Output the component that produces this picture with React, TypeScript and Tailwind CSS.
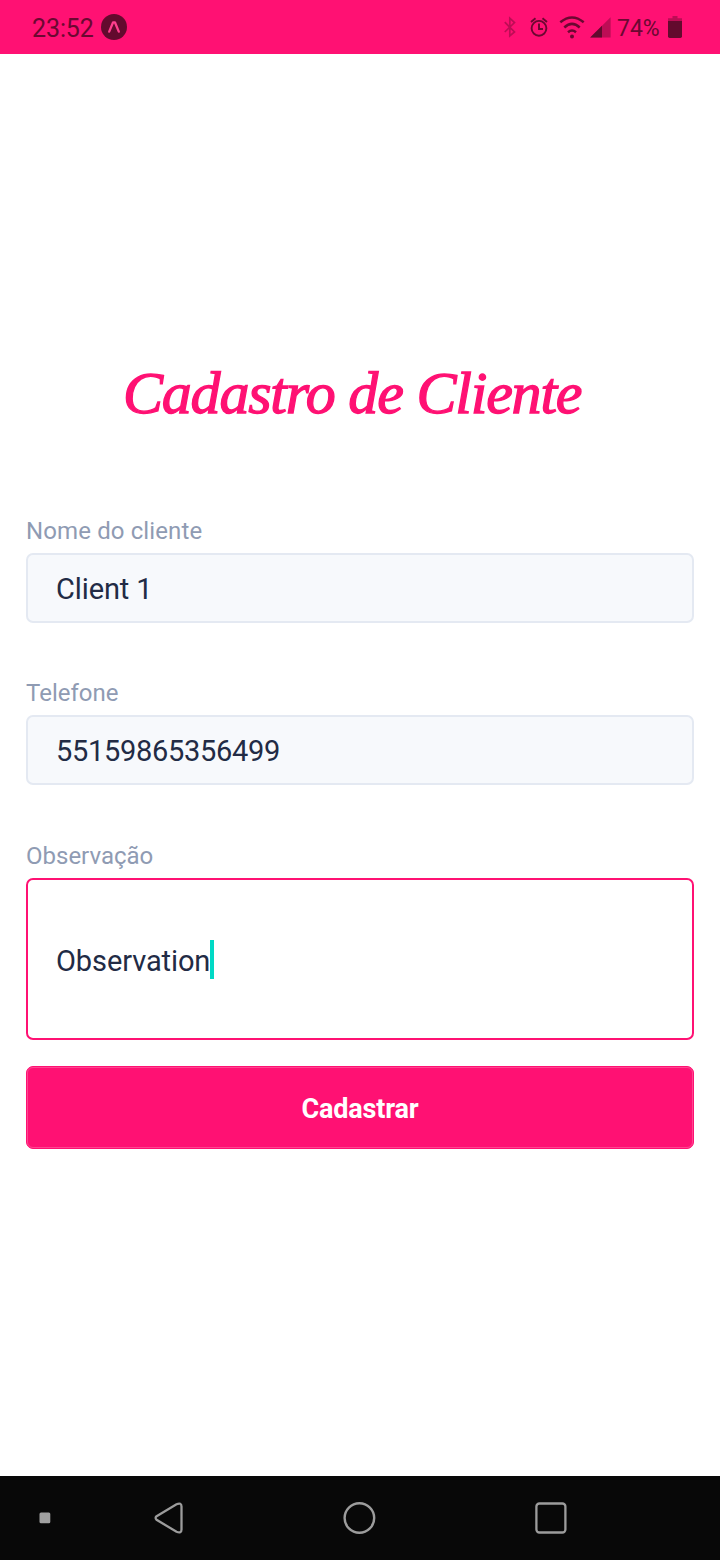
import type { ReactNode } from "react";

function StatusBar() {
  return (
    <header className="flex h-[54px] shrink-0 items-center bg-[#ff1173] pl-8 text-[#6b0831]">
      <span className="w-[69px] pt-[3px] text-[25px] leading-[51px] tracking-[-0.1px]">23:52</span>
      <svg width="26" height="26" viewBox="0 0 26 26">
        <circle cx="13" cy="13" r="13" fill="#630a2e" />
        <path d="M8.2 17.6 12.1 8.3h1.8l3.9 9.3" fill="none" stroke="#ff3f8e" strokeWidth="2.3" strokeLinecap="round" strokeLinejoin="round" />
      </svg>
      <svg className="ml-[373px]" width="118" height="30" viewBox="500 12 118 30">
        <path d="M504.8 22.2 514.5 32 509.8 36V18.2L514.5 22.5 504.8 32" fill="none" stroke="#bd0d55" strokeWidth="1.7" />
        <g fill="none" stroke="#6b0831" strokeWidth="1.9">
          <circle cx="539" cy="28.3" r="7.4" />
          <path d="M539 23.5V29h4M531 22l4.5-3.7M547 22l-4.5-3.7" />
        </g>
        <g fill="none" stroke="#6b0831" strokeWidth="2.5">
          <path d="M560.3 22.3Q572 12.7 583.7 22.3" />
          <path d="M564.3 27.5Q572 20.3 579.7 27.5" />
          <path d="M568 32.2Q572 28.7 576 32.2" />
        </g>
        <circle cx="572" cy="36.5" r="2" fill="#6b0831" />
        <path d="M590.2 37.6 610.6 17.3V37.6Z" fill="#bd0d55" />
        <path d="M590.2 37.6 602 25.8V37.6Z" fill="#630a2e" />
      </svg>
      <span className="-ml-[1px] w-[50px] pt-[3px] text-[23px] leading-[51px]">74%</span>
      <svg width="16" height="24" viewBox="0 0 16 24">
        <path d="M5.5 1h5v2.2H15V6H1V3.2h4.5Z" fill="#bd0d55" />
        <path d="M1 6h14v15.3q0 1.7-1.7 1.7H2.700Q1 23 1 21.300Z" fill="#630a2e" />
      </svg>
    </header>
  );
}

function Field({ label, children }: { label: string; children: ReactNode }) {
  return (
    <label className="flex flex-col">
      <span className="h-[38px] text-[24px] leading-[32px] text-[#8f9bb3]">{label}</span>
      {children}
    </label>
  );
}

function NavBar() {
  return (
    <nav className="flex h-[84px] shrink-0 items-center bg-[#080808]">
      <svg className="ml-[39px]" width="12" height="12" viewBox="0 0 12 12">
        <rect x="0.500" y="0.500" width="10.800" height="10.800" rx="1.500" fill="#a0a0a0" />
      </svg>
      <svg className="ml-[102px]" width="32" height="34" viewBox="0 0 32 34" fill="none" stroke="#9c9c9c" strokeWidth="2.3">
        <path d="M3.600 15.200 23.500 3.200Q28.500 1.200 28.500 5.500V28.500Q28.500 32.800 23.500 30.800L3.600 18.800Q1.600 17 3.600 15.200Z" />
      </svg>
      <svg className="ml-[157px]" width="34" height="34" viewBox="0 0 34 34" fill="none" stroke="#9c9c9c" strokeWidth="2.4">
        <circle cx="17.400" cy="17" r="14.800" />
      </svg>
      <svg className="ml-[158px]" width="34" height="34" viewBox="0 0 34 34" fill="none" stroke="#9c9c9c" strokeWidth="2.300">
        <rect x="2.400" y="2.500" width="29" height="29" rx="3" />
      </svg>
    </nav>
  );
}

export default function App() {
  return (
    <div className="flex h-[1560px] w-[720px] flex-col bg-white font-['Roboto',sans-serif]">
      <StatusBar />
      <main className="flex flex-1 flex-col px-[26px]">
        <h1 className="mt-[294px] h-[96px] pl-[97px] text-[60px] leading-[90px] tracking-[-1.2px] whitespace-nowrap text-[#ff1173] italic [-webkit-text-stroke:1.3px_#ff1173] font-['Satisfy','Liberation_Serif',cursive]">
          Cadastro de Cliente
        </h1>
        <form className="mt-[71px] flex flex-col">
          <div className="tracking-[0.12px]">
            <Field label="Nome do cliente">
              <div className="flex h-[70px] items-center rounded-[7px] border-2 border-[#e4e9f2] bg-[#f7f9fc] pt-[3px] pl-7 text-[29px] tracking-[-0.1px] text-[#222b45]">Client 1</div>
            </Field>
          </div>
          <div className="mt-[54px]">
            <Field label="Telefone">
              <div className="flex h-[70px] items-center rounded-[7px] border-2 border-[#e4e9f2] bg-[#f7f9fc] pt-[3px] pl-7 text-[29px] tracking-[-0.3px] text-[#222b45]">55159865356499</div>
            </Field>
          </div>
          <div className="mt-[55px]">
            <Field label="Observação">
              <div className="flex h-[162px] items-center rounded-[7px] border-2 border-[#ff1173] bg-white pl-7 text-[29px] tracking-[-0.1px] text-[#222b45]">
                <span className="pt-[5px]">Observation</span>
                <span className="h-[39px] w-1 bg-[#00d9c5]" />
              </div>
            </Field>
          </div>
          <button type="button" className="mt-[26px] flex h-[83px] rounded-[7px] border border-[#ff1173] bg-[#ff1173] text-[27px] font-bold tracking-[-0.2px] text-white">
            <span className="flex flex-1 items-center justify-center self-stretch rounded-[6px] border border-[#ff4590] pt-1">Cadastrar</span>
          </button>
        </form>
      </main>
      <NavBar />
    </div>
  );
}
